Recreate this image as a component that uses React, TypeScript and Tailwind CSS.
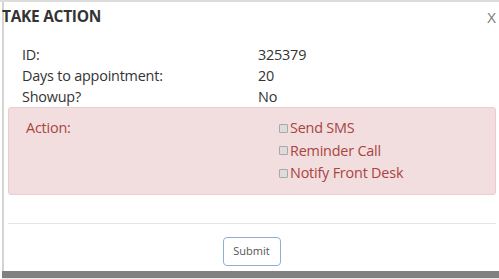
import React from "react";

export default function App() {
  const font = { fontFamily: '"Open Sans", "Noto Sans", sans-serif' };
  return (
    <div className="w-[499px] h-[279px] bg-white overflow-hidden relative" style={font}>
      <div className="h-[2px] bg-[#dcdcdc]" />
      <div className="flex h-[277px]">
        <div className="w-[2px] bg-white" />
        <div className="w-[2px] bg-[#d4d4d4]" />
        <div className="flex-1 flex flex-col">
          <div className="flex items-center justify-between h-[30px] pr-[3px]">
            <div className="text-[15.5px] font-bold text-[#333] -ml-[2px] tracking-[-0.3px]">TAKE ACTION</div>
            <div className="text-[15px] text-[#777]">X</div>
          </div>
          <div className="pl-[18px] text-[14.4px] text-[#333] leading-[21px] pt-[12px] tracking-[-0.2px]">
            <div className="grid grid-cols-[236px_1fr]">
              <div>ID:</div><div>325379</div>
              <div>Days to appointment:</div><div>20</div>
              <div>Showup?</div><div>No</div>
            </div>
          </div>
          <div className="ml-[4px] mr-[3px] mt-[0px] h-[88px] bg-[#f2dede] border border-[#ebccd1] rounded-[3px] text-[#a94442] text-[14.4px] tracking-[-0.2px] flex pt-[9px] pl-[17px]">
            <div className="w-[253px] leading-[22px]">Action:</div>
            <div className="flex flex-col leading-[22.5px]">
              {["Send SMS", "Reminder Call", "Notify Front Desk"].map((t) => (
                <div key={t} className="flex items-center">
                  <span className="inline-block w-[9px] h-[9px] border border-[#a8a8a8] bg-[#dcdcdc] rounded-[1px] mr-[2px]" />
                  {t}
                </div>
              ))}
            </div>
          </div>
          <div className="mt-[28px] ml-[4px] mr-[3px] h-[1px] bg-[#e5e5e5]" />
          <div className="flex justify-center pt-[13px]">
            <button className="w-[58px] h-[29px] border border-[#8fb0d3] rounded-[4px] text-[11px] text-[#555] bg-white">
              Submit
            </button>
          </div>
          <div className="flex-1" />
          <div className="h-[7px] bg-[#808080] -ml-[2px]" />
          <div className="h-[1px] bg-[#e8e8e8] -ml-[2px]" />
        </div>
      </div>
    </div>
  );
}
